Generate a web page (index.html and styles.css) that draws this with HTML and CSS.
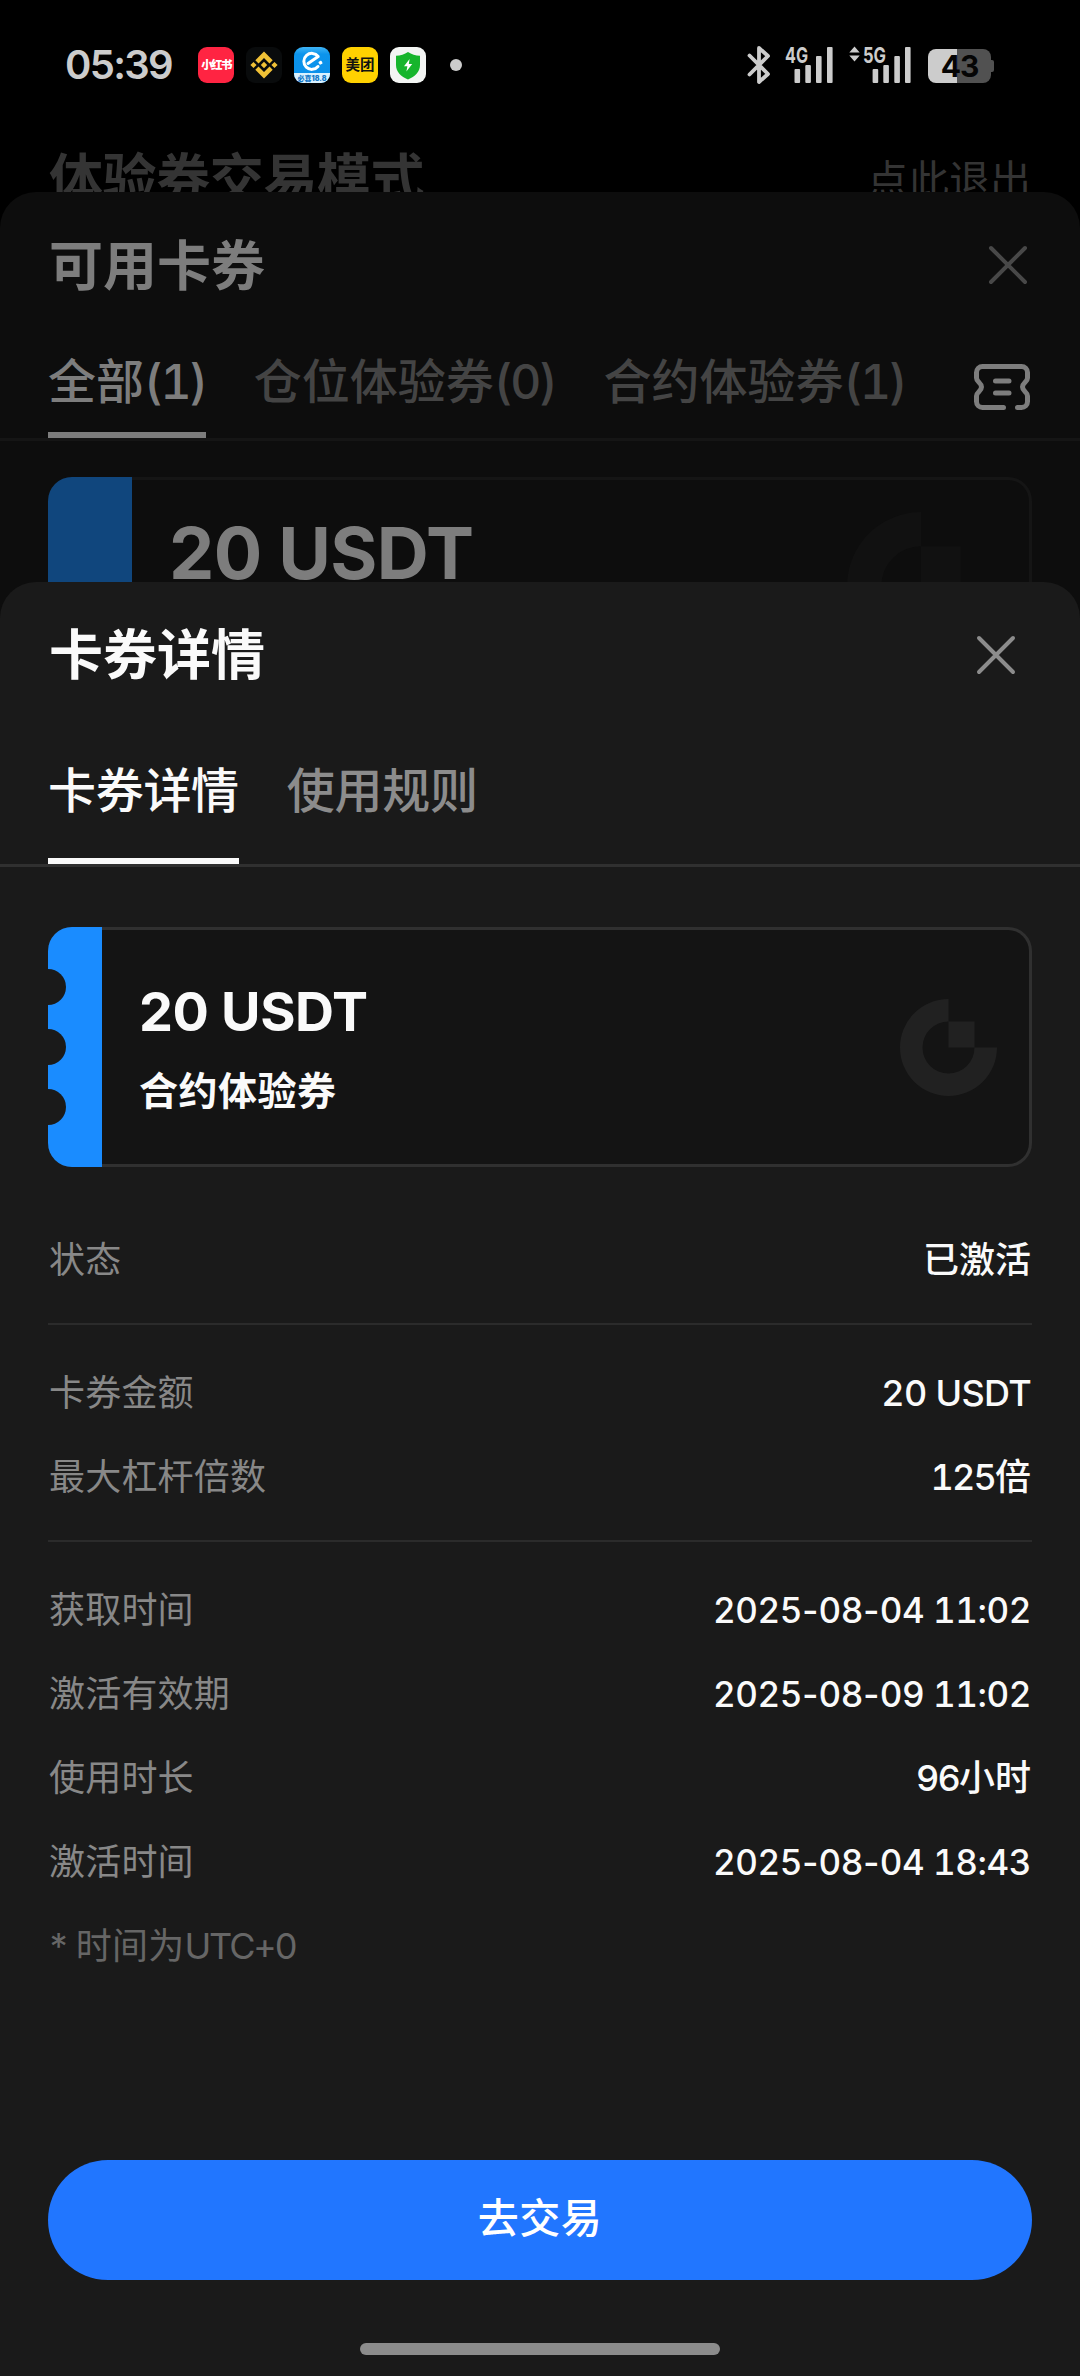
FILE: index.html
```html
<!DOCTYPE html>
<html lang="zh-CN">
<head>
<meta charset="utf-8">
<title>卡券详情</title>
<link rel="stylesheet" href="styles.css">
</head>
<body>
<div class="screen">
  <header class="status">
    <span class="clock">05:39</span>
    <div class="apps">
      <span class="app app-red">小红书</span>
      <svg class="app" viewBox="0 0 36 36"><rect width="36" height="36" rx="9" fill="#090b0c"/><g fill="#f0c136"><path d="M18 4.500l8.700 8.700-3.200 3.200-5.500-5.500-5.500 5.500-3.200-3.200z"/><path d="M18 31.500l8.700-8.700-3.200-3.200-5.500 5.500-5.500-5.500-3.200 3.200z"/><path d="M18 14.800l3.200 3.200-3.200 3.200-3.200-3.200zM7.500 14.900l3.100 3.100-3.100 3.100L4.400 18zM28.500 14.900l3.100 3.100-3.100 3.100-3.100-3.100z"/></g></svg>
      <svg class="app" viewBox="0 0 36 36"><defs><linearGradient id="sky" x1="0" y1="0" x2="0" y2="1"><stop offset="0" stop-color="#3fb4f6"/><stop offset=".2" stop-color="#0c94ec"/><stop offset="1" stop-color="#0a8fea"/></linearGradient></defs><rect width="36" height="36" rx="9" fill="url(#sky)"/><path d="M0 26h36v1a9 9 0 0 1-9 9H9a9 9 0 0 1-9-9z" fill="#d9f1ff"/><path d="M14 16.500L24.200 9.500A8 8 0 1 0 24 19.500" fill="none" stroke="#fff" stroke-width="3" stroke-linecap="round" stroke-linejoin="round"/><rect x="24.800" y="14" width="3.400" height="3.400" rx=".8" transform="rotate(-30 26.500 15.700)" fill="#fff"/><text x="18" y="33.800" text-anchor="middle" class="promo">必喜18.8</text></svg>
      <span class="app app-yellow">美团</span>
      <svg class="app" viewBox="0 0 36 36"><rect width="36" height="36" rx="9" fill="#f3f5f3"/><path d="M18 5c3.500 2.300 7.500 3.500 12 3.800V18c0 7-5 11.500-12 14.500C11 29.500 6 25 6 18V8.800C10.500 8.500 14.500 7.300 18 5z" fill="#16b52c"/><path d="M19.600 12l-5.600 7.300h3.400L16.400 24.500l5.800-7.400h-3.400z" fill="#fff"/></svg>
    </div>
    <span class="more-dot"></span>
    <div class="radios">
      <svg class="bt" viewBox="0 0 24 38"><path d="M2.500 9.500L21 28 12 36V2l9 8L2.500 28.500" fill="none" stroke="#ccc" stroke-width="3.800" stroke-linejoin="round" stroke-linecap="round"/></svg>
      <svg class="sig sig-4g" viewBox="0 0 48 38"><text class="net" x="0" y="17" textLength="23" lengthAdjust="spacingAndGlyphs">4G</text><g fill="#ccc"><rect x="9.500" y="23" width="5.600" height="14" rx="1"/><rect x="20.300" y="19" width="5.600" height="18" rx="1"/><rect x="31" y="10" width="5.600" height="27" rx="1"/><rect x="42" y="1" width="5.600" height="36" rx="1"/></g></svg>
      <svg class="sig sig-5g" viewBox="0 0 62 38"><g fill="#ccc"><path d="M5.500 .5l5.200 6H.3zM5.500 15.500l5.200-6H.3z"/><rect x="23.600" y="23" width="5.600" height="14" rx="1"/><rect x="34.300" y="19" width="5.600" height="18" rx="1"/><rect x="45.300" y="10" width="5.600" height="27" rx="1"/><rect x="56" y="1" width="5.600" height="36" rx="1"/></g><text class="net" x="14" y="17" textLength="23" lengthAdjust="spacingAndGlyphs">5G</text></svg>
      <span class="battery"><span>43</span></span>
    </div>
  </header>
  <div class="banner"><span class="banner-title">体验券交易模式</span><span class="banner-exit">点此退出</span></div>

  <section class="sheet list-sheet">
    <div class="sheet-head">
      <h2>可用卡券</h2>
      <svg class="close" viewBox="0 0 40 40"><path d="M3 3l34 34M37 3L3 37"/></svg>
    </div>
    <nav class="tabs">
      <span class="tab active">全部<i>(1)</i></span>
      <span class="tab">仓位体验券<i>(0)</i></span>
      <span class="tab">合约体验券<i>(1)</i></span>
      <svg class="ticket" viewBox="0 0 56 46"><g fill="none" stroke="#7d7d7d" stroke-width="5" stroke-linecap="round" stroke-linejoin="round"><path d="M29.500 43.500H8.500a6 6 0 0 1-6-6V32c0-4 5-4.500 5-9s-5-5-5-9V8.500a6 6 0 0 1 6-6h39a6 6 0 0 1 6 6V14c0 4-5 4.500-5 9s5 5 5 9v5.500a6 6 0 0 1-6 6h-4"/><path d="M21.500 17h13.500M21.500 29h13.500"/></g></svg>
    </nav>
    <div class="coupon">
      <div class="stub"></div>
      <div class="coupon-body"><strong>20 USDT</strong></div>
      <svg class="mark" viewBox="0 0 97 97"><path d="M48.500 0A48.500 48.500 0 1 0 97 48.500H74.500A26 26 0 1 1 48.500 22.500zM48.500 22.500h26v26h-26z"/></svg>
    </div>
  </section>

  <section class="sheet detail-sheet">
    <div class="sheet-head">
      <h2>卡券详情</h2>
      <svg class="close" viewBox="0 0 40 40"><path d="M3 3l34 34M37 3L3 37"/></svg>
    </div>
    <nav class="tabs">
      <span class="tab active">卡券详情</span>
      <span class="tab">使用规则</span>
    </nav>
    <div class="coupon">
      <div class="stub"><b></b><b></b><b></b></div>
      <div class="coupon-body"><strong>20 USDT</strong><span>合约体验券</span></div>
      <svg class="mark" viewBox="0 0 97 97"><path d="M48.500 0A48.500 48.500 0 1 0 97 48.500H74.500A26 26 0 1 1 48.500 22.500zM48.500 22.500h26v26h-26z"/></svg>
    </div>
    <dl class="facts">
      <div><dt>状态</dt><dd>已激活</dd></div>
      <hr>
      <div><dt>卡券金额</dt><dd class="amount">20 USDT</dd></div>
      <div><dt>最大杠杆倍数</dt><dd><i>125</i>倍</dd></div>
      <hr>
      <div><dt>获取时间</dt><dd class="date">2025<i>-</i>08<i>-</i>04 11:02</dd></div>
      <div><dt>激活有效期</dt><dd class="date">2025<i>-</i>08<i>-</i>09 11:02</dd></div>
      <div><dt>使用时长</dt><dd><i>96</i>小时</dd></div>
      <div><dt>激活时间</dt><dd class="date">2025<i>-</i>08<i>-</i>04 18:43</dd></div>
      <div class="note"><dt><i>* </i>时间为<i>UTC+0</i></dt></div>
    </dl>
    <button class="cta">去交易</button>
    <div class="home"></div>
  </section>
</div>
</body>
</html>
```

FILE: styles.css
```css
* { box-sizing: border-box; margin: 0; padding: 0; }
body { background: #000; font-family: Inter, "Noto Sans CJK SC", sans-serif; }
svg { display: block; flex: none; overflow: visible; }
i { font-style: normal; }

.screen { position: relative; width: 1080px; height: 2376px; overflow: hidden; background: #000; }

/* status bar */
.status { display: flex; align-items: center; height: 130px; padding: 0 87px 0 65px; color: #ccc; }
.clock { width: 133px; font-size: 40px; font-weight: 600; line-height: 40px; letter-spacing: -1.7px; }
.apps { display: flex; gap: 12px; }
.app { width: 36px; height: 36px; border-radius: 9px; line-height: 36px; text-align: center; font-weight: 900; white-space: nowrap; }
.app-red { background: #ff2442; color: #fff; font-size: 11.5px; letter-spacing: -1.6px; }
.app-yellow { background: #ffd100; color: #111; font-size: 14.5px; font-weight: 700; }
.promo { font-size: 7px; font-weight: 900; fill: #1479c8; }
.more-dot { width: 12px; height: 12px; margin-left: 24px; border-radius: 50%; background: #ccc; }
.radios { display: flex; margin-left: auto; height: 38px; }
.bt { width: 24px; height: 38px; }
.sig { height: 38px; }
.sig-4g { width: 48px; margin-left: 14px; }
.sig-5g { width: 62px; margin-left: 16px; }
.net { font: 700 22px Inter, sans-serif; fill: #ccc; }
.battery { position: relative; width: 63px; height: 34px; margin: 3px 2px 0 17px; border-radius: 8px; background: linear-gradient(90deg, #ccc 29px, #515151 29px); color: #050505; font-size: 30px; font-weight: 700; line-height: 35px; text-align: center; letter-spacing: -1px; }
.battery::after { content: ""; position: absolute; right: -3px; top: 11px; width: 4px; height: 12px; border-radius: 0 2px 2px 0; background: #515151; }

.banner { display: flex; justify-content: space-between; align-items: center; height: 100px; padding: 0 49px 0 49px; color: #343434; }
.banner-title { font-size: 54px; font-weight: 600; line-height: 54px; letter-spacing: -0.4px; }
.banner-exit { font-size: 41px; line-height: 42px; }

/* bottom sheets, stacked over the page */
.sheet { position: absolute; left: 0; right: 0; bottom: 0; border-radius: 36px 36px 0 0; overflow: hidden; }
.sheet-head { display: flex; align-items: center; justify-content: space-between; padding-left: 49px; }
.sheet-head h2 { font-size: 54px; font-weight: 700; line-height: 60px; }
.close { width: 40px; height: 40px; }
.close path { stroke: currentColor; stroke-width: 4; stroke-linecap: round; }
.tabs { display: flex; gap: 48px; padding: 0 48px; border-bottom: 3px solid; font-size: 48px; font-weight: 500; line-height: 60px; white-space: nowrap; }
.tab { border-bottom: 6px solid transparent; }
.coupon { display: flex; align-items: center; margin: 0 48px; border: 3px solid; border-left: 0; border-radius: 24px; }
.stub { align-self: stretch; margin: -3px 0; border-radius: 24px 0 0 24px; overflow: hidden; }
.coupon-body { display: flex; flex-direction: column; flex: 1; }

.list-sheet { top: 192px; background: #0d0d0d; color: #7d7d7d; }
.list-sheet .sheet-head { height: 150px; padding-right: 52px; }
.list-sheet .close { color: #484848; margin-top: -4px; }
.list-sheet .tabs { border-color: #151515; }
.list-sheet .tab { padding: 10px 0 20px; color: #444; }
.list-sheet .tab i { letter-spacing: -2.3px; font-variant-numeric: tabular-nums; }
.list-sheet .tab.active { color: #7d7d7d; border-color: #7d7d7d; }
.ticket { width: 56px; height: 46px; margin: 22px 2px 0 auto; }
.list-sheet .coupon { height: 318px; margin-top: 36px; border-color: #151515; align-items: flex-start; }
.list-sheet .stub { width: 84px; background: #10467d; }
.list-sheet .coupon-body { padding: 34px 0 0 37px; }
.list-sheet strong { font-size: 72px; font-weight: 700; line-height: 78px; letter-spacing: -0.6px; }
.list-sheet .mark { width: 148px; height: 148px; margin: 32px 34px 0 0; fill: #111; }

.detail-sheet { top: 582px; background: #1a1a1a; color: #fafafa; }
.detail-sheet .sheet-head { height: 148px; padding-right: 64px; }
.detail-sheet .close { color: #8c8c8c; margin-top: -3px; }
.detail-sheet .tabs { border-color: #303030; }
.detail-sheet .tab { padding: 31px 0 37px; color: #8c8c8c; letter-spacing: -0.3px; }
.detail-sheet .tab.active { color: #fafafa; border-color: #fafafa; }
.detail-sheet .coupon { height: 240px; margin-top: 60px; border-color: #303030; background: #141414; }
.detail-sheet .stub { display: flex; flex-direction: column; justify-content: center; gap: 24px; width: 54px; background: #1a8cff; }
.stub b { width: 36px; height: 36px; margin-left: -18px; border-radius: 50%; background: #1a1a1a; }
.detail-sheet .coupon-body { padding-left: 37px; gap: 22px; }
.detail-sheet strong { font-size: 54px; font-weight: 700; line-height: 66px; letter-spacing: -0.4px; }
.detail-sheet .coupon-body span { font-size: 39px; font-weight: 700; line-height: 48px; letter-spacing: 0.5px; }
.detail-sheet .mark { width: 97px; height: 97px; margin-right: 32px; fill: #212121; }

.facts { margin: 51px 49px 0; font-size: 36px; line-height: 84px; font-variant-numeric: tabular-nums; }
.facts div { display: flex; justify-content: space-between; height: 84px; }
.facts hr { height: 2px; margin: 21px -1px 26px; border: 0; background: #2b2b2b; }
.facts dt { color: #888; white-space: pre; letter-spacing: 0.2px; }
.facts dd { font-weight: 500; }
.facts dd i { letter-spacing: -1.8px; }
.facts .amount { letter-spacing: -0.7px; }
.facts .date { font-size: 35px; letter-spacing: -0.45px; }
.facts .date i { margin: 0 -3px; letter-spacing: 0; }
.facts .note dt { color: #666; margin-left: -2px; }
.facts .note i { letter-spacing: -2.1px; }

.cta { display: block; width: 984px; height: 120px; margin: 172px auto 0; padding-bottom: 5px; border: 0; border-radius: 60px; background: #2176ff; color: #fff; font: 500 41px/60px Inter, "Noto Sans CJK SC", sans-serif; letter-spacing: 0.5px; }
.home { width: 360px; height: 12px; margin: 63px auto 0; border-radius: 6px; background: #8c8c8c; }
```
